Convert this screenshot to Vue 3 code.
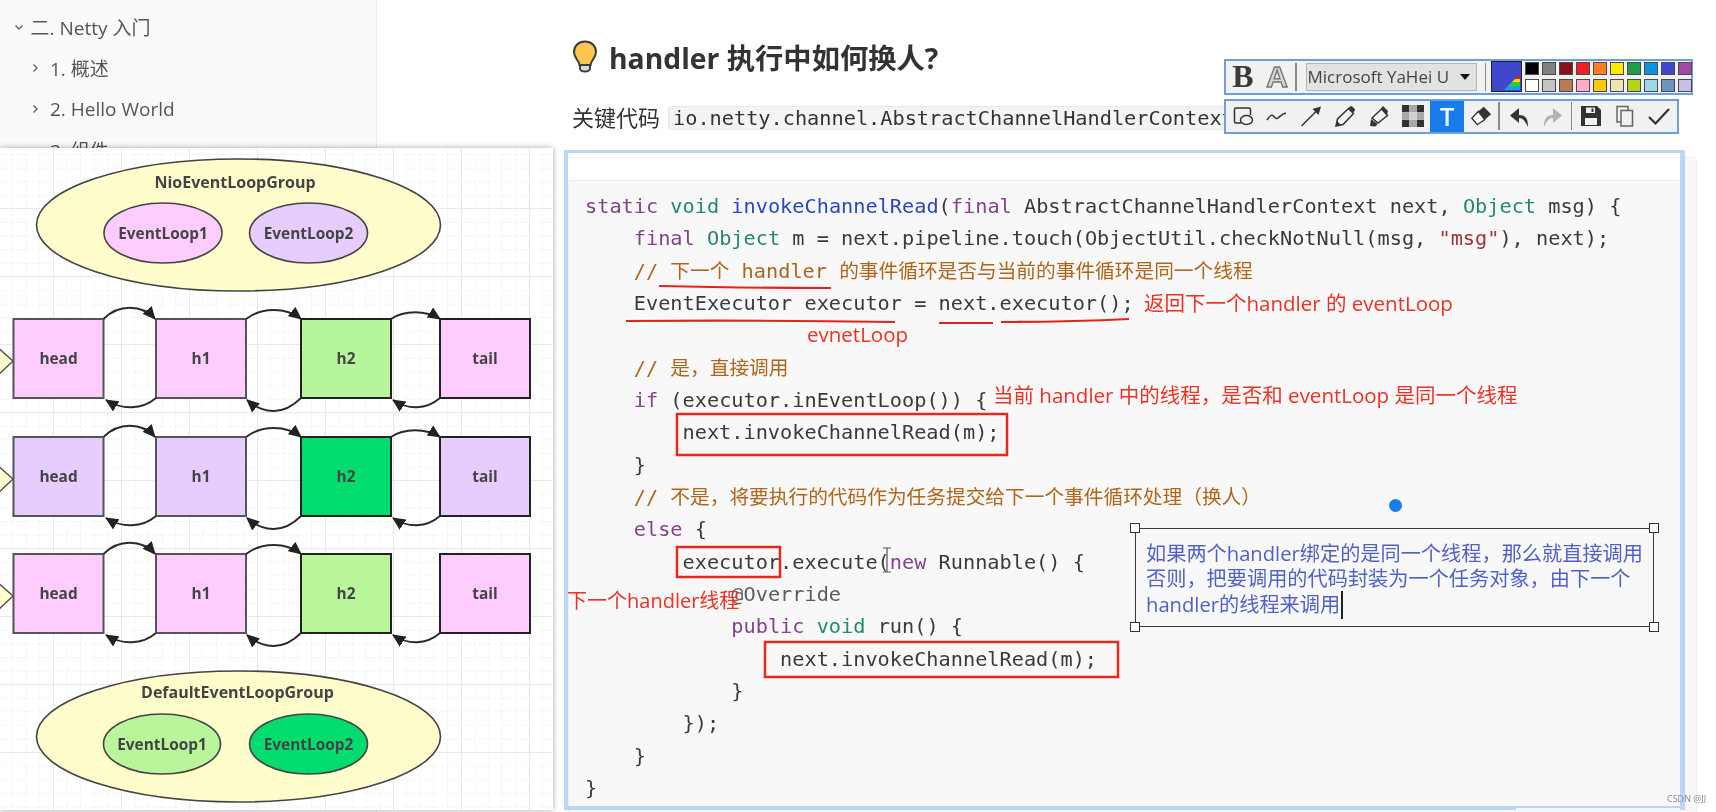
<script setup>
const side = [
  { text: '二. Netty 入门', open: true, cls: 'lv1' },
  { text: '1. 概述', open: false, cls: 'lv2' },
  { text: '2. Hello World', open: false, cls: 'lv2' },
  { text: '3. 组件', open: true, cls: 'lv2' }
]
const rawCode = [
  [['k','static'],['',' '],['t','void'],['',' '],['d','invokeChannelRead'],['','(' ],['k','final'],['',' AbstractChannelHandlerContext next, '],['t','Object'],['',' msg) {']],
  [['','    '],['k','final'],['',' '],['t','Object'],['',' m = next.pipeline.touch(ObjectUtil.checkNotNull(msg, '],['s','"msg"'],['','), next);']],
  [['','    '],['c','// 下一个 handler 的事件循环是否与当前的事件循环是同一个线程']],
  [['','    EventExecutor executor = next.executor();']],
  [['',' ']],
  [['','    '],['c','// 是，直接调用']],
  [['','    '],['k','if'],['',' (executor.inEventLoop()) {']],
  [['','        next.invokeChannelRead(m);']],
  [['','    }']],
  [['','    '],['c','// 不是，将要执行的代码作为任务提交给下一个事件循环处理（换人）']],
  [['','    '],['k','else'],['',' {']],
  [['','        executor.execute('],['k','new'],['',' Runnable() {']],
  [['','            '],['m','@Override']],
  [['','            '],['k','public'],['',' '],['t','void'],['',' run() {']],
  [['','                next.invokeChannelRead(m);']],
  [['','            }']],
  [['','        });']],
  [['','    }']],
  [['','}']]
]
// Comments mix monospace Latin with slightly narrower CJK runs.
const code = rawCode.map((line) =>
  line.flatMap(([cls, text]) => {
    if (cls !== 'c') return [[cls, text]]
    return text
      .split(/([\u3000-\u9fff\uff00-\uffef]+)/)
      .filter(Boolean)
      .map((part) => [/[\u3000-\u9fff\uff00-\uffef]/.test(part) ? 'c cz' : 'c', part])
  })
)
const rows = [
  { top: 319, bg: '#ffccff', h2: '#b6f59b', topTail: true },
  { top: 437, bg: '#e6ccff', h2: '#00dd6e', topTail: true },
  { top: 554, bg: '#ffccff', h2: '#b9f59b', topTail: false }
]
const boxes = [
  { x: 13.5, label: 'head', k: 'bg', s: '#555' },
  { x: 156, label: 'h1', k: 'bg', s: '#555' },
  { x: 301, label: 'h2', k: 'h2', s: '#222' },
  { x: 440, label: 'tail', k: 'bg', s: '#222' }
]
const swatches = ['#000000','#808080','#8b0f18','#ed2024','#f97f27','#fdea00','#1e9e4a','#0d93e0','#3f48cc','#a349a4',
  '#ffffff','#c3c3c3','#b97a57','#ffaec9','#ffc90e','#efe4b0','#b5d51d','#99d9ea','#7092be','#c8bfe7']
const handles = ['tl', 'tr', 'bl', 'br']
</script>

<template>
  <div class="page">
    <aside class="sidebar">
      <div v-for="s in side" :key="s.text" class="side-item" :class="s.cls">
        <svg class="chev" width="10" height="10" viewBox="0 0 10 10">
          <path v-if="s.open" d="M1.5 3.5 L5 7 L8.5 3.5" />
          <path v-else d="M3.5 1.5 L7 5 L3.5 8.5" />
        </svg>
        <span>{{ s.text }}</span>
      </div>
    </aside>

    <main class="main">
      <h1 class="title">
        <svg class="bulb" width="26" height="33" viewBox="0 0 26 33">
          <path d="M13 1.5C6.5 1.5 2 6 2 12c0 4.5 2.6 7 4.2 9.5 1 1.5 1.2 2.7 1.2 3.5h11.2c0-.8.2-2 1.2-3.5C21.400 19 24 16.500 24 12 24 6 19.500 1.500 13 1.500z" fill="#fdc64f" stroke="#3c3c3c" stroke-width="2"/>
          <path d="M8 25v3.500c0 1.500 2 3 5 3s5-1.500 5-3V25z" fill="#d9d9d9" stroke="#3c3c3c" stroke-width="2"/>
        </svg>
        <span>handler 执行中如何换人?</span>
      </h1>
      <p class="para">关键代码<code class="inline">io.netty.channel.AbstractChannelHandlerContext</code></p>
      <div class="code">
        <div v-for="(line, i) in code" :key="i" class="line"><span v-for="(t, j) in line" :key="j" :class="t[0]">{{ t[1] }}</span></div>
      </div>
    </main>

    <div class="sel-frame"><div class="sel-top"></div></div>

    <section class="shot">
      <svg class="diagram" width="553" height="662" viewBox="0 148 553 662">
        <defs>
          <marker id="ah" markerUnits="userSpaceOnUse" markerWidth="14" markerHeight="12" refX="12" refY="6" orient="auto">
            <path d="M0 0 L13 6 L0 12 z" fill="#222" />
          </marker>
        </defs>
        <g class="group">
          <ellipse cx="238.500" cy="225" rx="202" ry="66" fill="#fffdcc" />
          <text x="235" y="188" class="lbl big">NioEventLoopGroup</text>
          <ellipse cx="163" cy="233" rx="59" ry="30" fill="#ffccff" />
          <text x="163" y="239" class="lbl">EventLoop1</text>
          <ellipse cx="308.500" cy="233" rx="59" ry="30" fill="#e6ccff" />
          <text x="308.500" y="239" class="lbl">EventLoop2</text>
        </g>
        <g v-for="r in rows" :key="r.top">
          <polygon :points="`-4,${r.top+27} 13,${r.top+42} -4,${r.top+58}`" fill="#fffdcc" stroke="#555" stroke-width="1.500" />
          <g v-for="b in boxes" :key="b.label">
            <rect :x="b.x" :y="r.top" width="90" height="79" :fill="r[b.k]" :stroke="b.s" stroke-width="2" />
            <text :x="b.x + 45" :y="r.top + 45" class="lbl">{{ b.label }}</text>
          </g>
          <g class="arc">
            <path :d="`M103.500 ${r.top} C118 ${r.top-15} 142 ${r.top-15} 155 ${r.top}`" marker-end="url(#ah)" />
            <path :d="`M246 ${r.top} C262 ${r.top-12} 286 ${r.top-12} 301 ${r.top}`" marker-end="url(#ah)" />
            <path v-if="r.topTail" :d="`M391 ${r.top} C404 ${r.top-9} 426 ${r.top-9} 440 ${r.top}`" marker-end="url(#ah)" />
            <path :d="`M156 ${r.top+79} C142 ${r.top+91} 122 ${r.top+91} 106 ${r.top+81}`" marker-end="url(#ah)" />
            <path :d="`M301 ${r.top+79} C284 ${r.top+96} 264 ${r.top+96} 247 ${r.top+81}`" marker-end="url(#ah)" />
            <path :d="`M440 ${r.top+79} C426 ${r.top+91} 408 ${r.top+91} 393 ${r.top+81}`" marker-end="url(#ah)" />
          </g>
        </g>
        <g class="group">
          <ellipse cx="238.500" cy="736.500" rx="202" ry="65.500" fill="#fffdcc" />
          <text x="237.500" y="698" class="lbl big">DefaultEventLoopGroup</text>
          <ellipse cx="162" cy="744" rx="58.500" ry="30" fill="#b9f59b" />
          <text x="162" y="750" class="lbl">EventLoop1</text>
          <ellipse cx="308.500" cy="744" rx="59" ry="30" fill="#00dd6e" />
          <text x="308.500" y="750" class="lbl">EventLoop2</text>
        </g>
      </svg>
    </section>

    <svg class="marks" width="1716" height="812" viewBox="0 0 1716 812">
      <g class="red-line">
        <path d="M659 286 Q740 288 831 288" />
        <path d="M626 321 Q760 320 895 322" />
        <path d="M939 323 L993 323" />
        <path d="M1001 322 Q1070 322 1129 319" />
      </g>
      <g class="red-box">
        <rect x="677" y="414" width="330" height="41" />
        <rect x="677" y="547" width="103" height="30" />
        <rect x="765" y="642" width="353" height="35" />
      </g>
      <text x="807" y="342" class="note wide">evnetLoop</text>
      <text x="1144" y="311" class="note wide">返回下一个handler 的 eventLoop</text>
      <text x="993" y="403" class="note wide">当前 handler 中的线程，是否和 eventLoop 是同一个线程</text>
      <text x="567" y="608" class="note">下一个handler线程</text>
      <path class="ibeam" d="M883 548h8M887 548v24M883 572h8" />
    </svg>

    <div class="dot"></div>
    <div class="textbox">
      <i v-for="h in handles" :key="h" class="handle" :class="h"></i>
      <div>如果两个handler绑定的是同一个线程，那么就直接调用</div>
      <div>否则，把要调用的代码封装为一个任务对象，由下一个</div>
      <div>handler的线程来调用<b class="caret"></b></div>
    </div>

    <div class="toolbar">
      <div class="tb-row top">
        <span class="cell bold">B</span>
        <span class="cell outline">A</span>
        <i class="sep s1"></i>
        <div class="select"><span class="sel-text">Microsoft YaHei U</span><i class="drop"></i></div>
        <i class="sep s2"></i>
        <div class="current">
          <svg width="28" height="28" viewBox="0 0 28 28">
            <polygon points="28,12 28,17 23,17" fill="#e02020" />
            <polygon points="23,17 28,17 28,20 20,20" fill="#f5d90a" />
            <polygon points="20,20 28,20 28,24 16,24" fill="#2ecc40" />
            <polygon points="16,24 28,24 28,28 12,28" fill="#1a9fe0" />
          </svg>
        </div>
        <div class="swatches">
          <i v-for="c in swatches" :key="c" :style="{ background: c }"></i>
        </div>
      </div>
      <div class="tb-row bottom">
        <span class="cell"><svg width="24" height="24" viewBox="0 0 24 24" class="ic"><path d="M10 19H5a1.500 1.500 0 0 1-1.500-1.500V5.500A1.500 1.500 0 0 1 5 4h13a1.500 1.500 0 0 1 1.500 1.500V11" /><ellipse cx="15.500" cy="16" rx="6" ry="4.500" /></svg></span>
        <span class="cell"><svg width="24" height="24" viewBox="0 0 24 24" class="ic"><path d="M2 16c2.500-4 4.500-6 6.500-4s2.500 3.500 4.500 2 4-4.500 8-5" /></svg></span>
        <span class="cell"><svg width="24" height="24" viewBox="0 0 24 24" class="ic"><path d="M2.500 22L18 6.500" /><path d="M22 2.500l-2.500 8.500-6-6z" fill="#333" stroke="none" /></svg></span>
        <span class="cell"><svg width="24" height="24" viewBox="0 0 24 24" class="ic"><path d="M3 22l1.500-7L15.500 4.500l5 5L10 20.500z" /><path d="M17 2.500a1.600 1.600 0 0 1 2.300 0l2.200 2.200a1.600 1.600 0 0 1 0 2.300L20 8.500l-4.500-4.500z" fill="#333" stroke="none" /><path d="M3 22l1-5 4 4z" fill="#333" stroke="none" /></svg></span>
        <span class="cell"><svg width="24" height="24" viewBox="0 0 24 24" class="ic"><path d="M5 14L14.500 5l6 6.500L11 19z" /><path d="M14 4.500l2-2.500 5 5-1 3.500z" fill="#333" stroke="none" /><path d="M3 22l1-7 6.500 5-2 2.500z" fill="#333" stroke="none" /></svg></span>
        <span class="cell"><svg width="24" height="24" viewBox="0 0 24 24"><path d="M1 1h7.300v7.300H1zM15.700 1H23v7.300h-7.300zM1 15.700h7.300V23H1zM15.700 15.700H23V23h-7.300z" fill="#333" /><path d="M8.300 1h7.400v7.300H8.300zM1 8.300h7.300v7.400H1zM15.700 8.300H23v7.400h-7.300zM8.300 15.700h7.400V23H8.300z" fill="#a8a8a8" /><path d="M8.300 8.300h7.400v7.400H8.300z" fill="#d0d0d0" /></svg></span>
        <span class="cell active"><span class="t-glyph">T</span></span>
        <span class="cell"><svg width="22" height="22" viewBox="0 0 24 24"><path d="M9 7l6-5 8 8-7 6z" fill="#333" /><path d="M9 7l-7 7.500 6 7 8-5.500z" fill="#fff" stroke="#333" stroke-width="1.500" /></svg></span>
        <i class="sep s3"></i>
        <span class="cell"><svg width="24" height="24" viewBox="0 0 24 24"><path d="M21 23c0-8-2-12-9-12V4L3 11.500 12 19v-5c4 0 6 3 9 9z" fill="#333" /></svg></span>
        <span class="cell"><svg width="24" height="24" viewBox="0 0 24 24"><path d="M3 23c0-8 2-12 9-12V4l9 7.500-9 7.500v-5c-4 0-6 3-9 9z" fill="#b3b3b3" /></svg></span>
        <i class="sep s4"></i>
        <span class="cell"><svg width="24" height="24" viewBox="0 0 24 24"><path d="M2 2h16l4 4v16H2z" fill="#333" /><path d="M7 3.500h9v5.500H7z" fill="#f0f0f0" /><path d="M12.500 4.500h2v3.500h-2z" fill="#333" /><path d="M6 14h12v7H6z" fill="#f0f0f0" /></svg></span>
        <span class="cell"><svg width="24" height="24" viewBox="0 0 24 24" class="ic soft"><path d="M7.500 18H4V2.500h11V6" /><path d="M8 6.500h11.500V22H8z" /></svg></span>
        <span class="cell"><svg width="24" height="24" viewBox="0 0 24 24" class="ic check"><path d="M2 13l6.500 6.500L22 5" /></svg></span>
      </div>
    </div>

    <div class="smear"></div>
    <div class="mark-csdn">CSDN @JJ</div>
  </div>
</template>

<style>
html, body { margin: 0; background: #fff; }
</style>

<style scoped>
.page {
  position: relative;
  display: flex;
  width: 1716px;
  height: 812px;
  overflow: hidden;
  background: #fff;
  font-family: "Open Sans", "Noto Sans CJK SC", sans-serif;
  color: #333;
  filter: blur(0.5px);
}
.sidebar {
  flex: 0 0 377px;
  box-sizing: border-box;
  padding-top: 7px;
  background: #fafafa;
  border-right: 1px solid #ececec;
  color: #555;
  font-size: 19px;
}
.side-item { display: flex; align-items: center; height: 40.8px; white-space: nowrap; }
.lv1 { padding-left: 13.5px; gap: 7px; }
.lv2 { padding-left: 30px; gap: 10px; }
.chev path { fill: none; stroke: #666; stroke-width: 1.4; }

.main {
  flex: 1;
  min-width: 0;
  padding: 36px 19px 0 195px;
}
.title {
  display: flex;
  align-items: center;
  gap: 11px;
  height: 40px;
  margin: 0;
  font-size: 28.3px;
  font-weight: 700;
  white-space: nowrap;
  color: #333;
}
.para {
  display: flex;
  align-items: center;
  height: 32px;
  margin: 24px 0 25px;
  font-size: 22px;
  white-space: nowrap;
}
.inline {
  margin: 4px 0 0 8px;
  padding: 0 4px;
  height: 22px;
  line-height: 22px;
  background: #f3f4f4;
  border: 1px solid #e7eaed;
  border-radius: 3px;
  font-family: "DejaVu Sans Mono", "Noto Sans CJK SC", monospace;
  font-size: 20.25px;
}
.code {
  box-sizing: border-box;
  margin-left: -4px;
  height: 680px;
  padding: 32px 0 0 16px;
  background: #f8f8f8;
  border: 1px solid #eee;
  border-radius: 3px;
  font-family: "DejaVu Sans Mono", "Noto Sans CJK SC", monospace;
  font-size: 20.25px;
  color: #3a3a3a;
}
.line { height: 32.33px; line-height: 32.33px; white-space: pre; }
.k { color: #85408f; }
.t { color: #23896c; }
.d { color: #2a46c4; }
.c { color: #b0651a; }
.cz { font-size: 19.7px; }
.s { color: #a83232; }
.m { color: #5c5c5c; }

.sel-frame {
  position: absolute;
  left: 564px;
  top: 150px;
  width: 1112px;
  height: 653px;
  border: solid #bcd6f5;
  border-width: 3px 5px 4px 4px;
}
.sel-top {
  height: 27px;
  background: #fff;
  border-bottom: 1px solid #eee;
}

.shot {
  position: absolute;
  left: 0;
  top: 148px;
  width: 553px;
  height: 662px;
  background-color: #fff;
  background-image:
    linear-gradient(#e9e9e9 1px, transparent 1px),
    linear-gradient(90deg, #e9e9e9 1px, transparent 1px),
    linear-gradient(#f6f6f6 1px, transparent 1px),
    linear-gradient(90deg, #f6f6f6 1px, transparent 1px);
  background-size: 68px 68px, 68px 68px, 13.6px 13.6px, 13.6px 13.6px;
  background-position: 0 60px, 53px 0, 0 6px, 12px 0;
  box-shadow: 0 0 6px rgba(0,0,0,.35);
}
.diagram { display: block; overflow: hidden; }
.group ellipse { stroke: #444; stroke-width: 1.6; }
.lbl {
  font-family: "Open Sans", sans-serif;
  font-weight: 700;
  font-size: 15.4px;
  fill: #444;
  text-anchor: middle;
}
.big { font-size: 16px; }
.arc path { fill: none; stroke: #2a2a2a; stroke-width: 1.8; }

.marks { position: absolute; left: 0; top: 0; pointer-events: none; }
.red-line path { fill: none; stroke: #e5231b; stroke-width: 2.2; }
.red-box rect { fill: none; stroke: #e8281c; stroke-width: 2.5; }
.note {
  font-family: "Open Sans", "Noto Sans CJK SC", sans-serif;
  font-size: 20px;
  fill: #ee3124;
}
.wide { font-size: 20.5px; }
.ibeam { fill: none; stroke: #555; stroke-width: 1.2; }

.dot {
  position: absolute;
  left: 1389px;
  top: 499px;
  width: 13px;
  height: 13px;
  border-radius: 50%;
  background: #1a7ce8;
}
.textbox {
  position: absolute;
  left: 1135px;
  top: 528px;
  box-sizing: border-box;
  width: 519px;
  height: 99px;
  padding: 12px 0 0 10px;
  border: 1.5px solid #3a3a3a;
  font-family: "Open Sans", "Noto Sans CJK SC", sans-serif;
  font-size: 20.2px;
  line-height: 25px;
  color: #5261c8;
  white-space: nowrap;
}
.handle {
  position: absolute;
  width: 8px;
  height: 8px;
  background: #fff;
  border: 1.5px solid #333;
}
.tl { left: -6px; top: -6px; }
.tr { right: -6px; top: -6px; }
.bl { left: -6px; bottom: -6px; }
.br { right: -6px; bottom: -6px; }
.caret {
  display: inline-block;
  width: 2px;
  height: 28px;
  margin-left: 1px;
  vertical-align: -7px;
  background: #222;
}

.toolbar {
  position: absolute;
  left: 1224px;
  top: 59px;
  display: flex;
  flex-direction: column;
  gap: 4px;
}
.tb-row {
  box-sizing: border-box;
  display: flex;
  align-items: center;
  height: 35.5px;
  background: #f1f1f1;
  border: 2px solid #6e9fd8;
}
.top { width: 469px; }
.bottom { width: 455px; }
.cell {
  flex: 0 0 34px;
  height: 100%;
  display: flex;
  align-items: center;
  justify-content: center;
  color: #333;
}
.ic { fill: none; stroke: #333; stroke-width: 1.5; }
.soft { stroke: #666; }
.check { stroke-width: 2.2; }
.bold { font-family: "Liberation Serif", serif; font-weight: 700; font-size: 32px; color: #3a3a3a; }
.outline {
  font-family: "Liberation Sans", sans-serif;
  font-weight: 700;
  font-size: 30px;
  color: #d8d8d8;
  -webkit-text-stroke: 1.4px #777;
}
.sep { flex: none; width: 1.5px; height: 28px; background: #8a8a8a; }
.s1 { margin: 0 9px 0 1px; }
.s2 { margin: 0 5px 0 8px; }
.s3 { margin: 0 2px 0 0; }
.s4 { margin: 0 2px 0 1px; }
.select {
  flex: 0 0 171px;
  box-sizing: border-box;
  height: 28px;
  display: flex;
  align-items: center;
  padding: 0 4px 0 1px;
  background: #e2e2e2;
  border: 1px solid #b5b5b5;
  font-size: 17px;
  color: #444;
}
.sel-text { width: 148px; overflow: hidden; white-space: nowrap; }
.drop {
  margin-left: 4px;
  border-left: 5px solid transparent;
  border-right: 5px solid transparent;
  border-top: 6px solid #111;
}
.current {
  flex: none;
  box-sizing: border-box;
  width: 31px;
  height: 31px;
  background: #3f48cc;
  border: 1.5px solid #222;
  overflow: hidden;
}
.current svg { display: block; }
.swatches {
  display: grid;
  grid-template-columns: repeat(10, 14px);
  grid-auto-rows: 13.5px;
  column-gap: 3px;
  row-gap: 3.5px;
  margin-left: 3px;
}
.swatches i { box-sizing: border-box; border: 1.5px solid #4a4a4a; }
.active { background: #1a7ce8; }
.t-glyph { font-family: "Open Sans", sans-serif; font-size: 26px; font-weight: 600; color: #eef5ff; line-height: 1; }

.smear {
  position: absolute;
  left: 1516px;
  top: 808px;
  width: 164px;
  height: 4px;
  background: #f4f8fd;
}
.mark-csdn {
  position: absolute;
  left: 1667px;
  top: 792px;
  font-family: "Open Sans", sans-serif;
  font-size: 9px;
  color: #8a8a8a;
}
</style>
